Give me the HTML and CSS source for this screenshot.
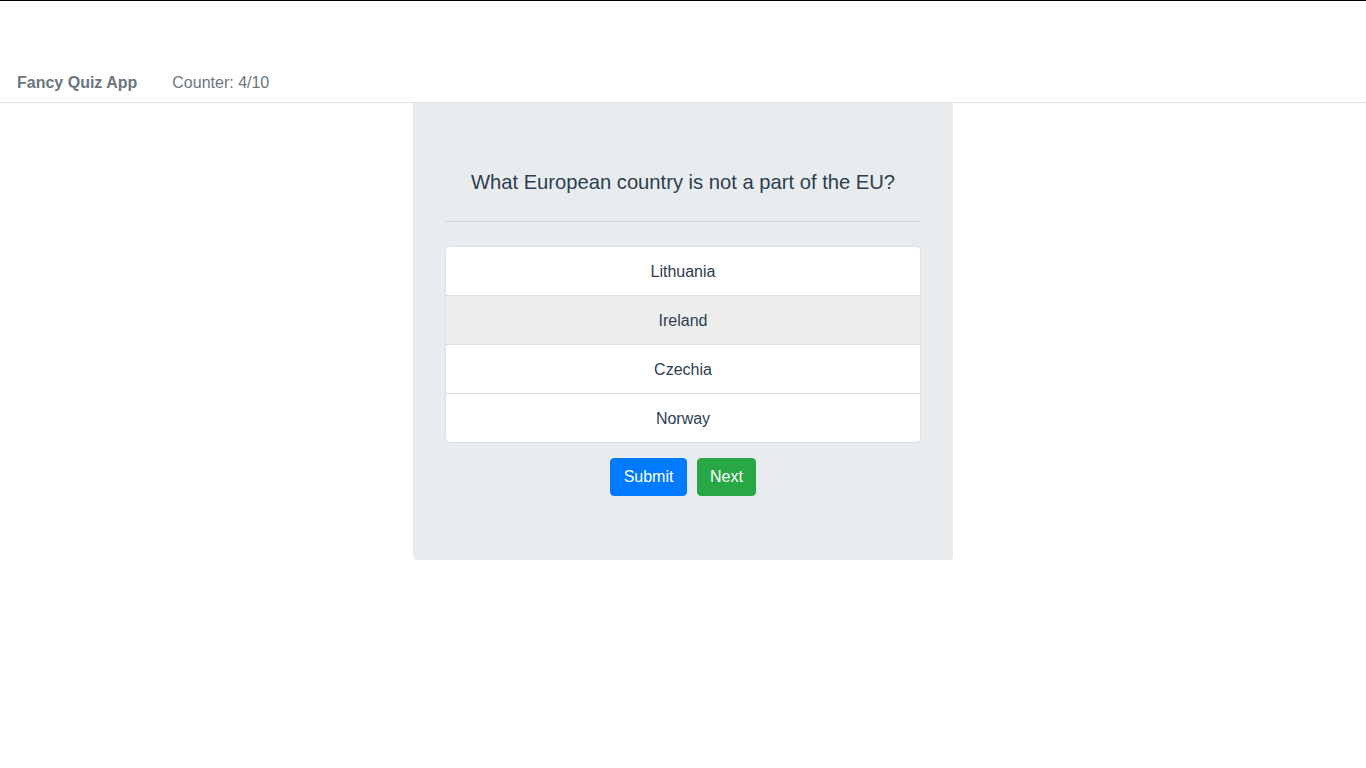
FILE: index.html
```html
<!DOCTYPE html>
<html lang="en">
<head>
<meta charset="utf-8">
<title>Fancy Quiz App</title>
<link rel="stylesheet" href="styles.css">
</head>
<body>
<div class="topline"></div>
<nav class="navbar">
  <span class="brand">Fancy Quiz App</span>
  <span class="counter">Counter: 4/10</span>
</nav>
<main class="container">
  <section class="jumbotron">
    <p class="question">What European country is not a part of the EU?</p>
    <hr class="divider">
    <ul class="answers">
      <li class="answer">Lithuania</li>
      <li class="answer selected">Ireland</li>
      <li class="answer">Czechia</li>
      <li class="answer">Norway</li>
    </ul>
    <div class="actions">
      <button class="btn btn-primary">Submit</button>
      <button class="btn btn-success">Next</button>
    </div>
  </section>
</main>
</body>
</html>
```
FILE: styles.css
```css
* { box-sizing: border-box; }
html, body {
  margin: 0;
  padding: 0;
  background: #fff;
  font-family: "Liberation Sans", Arial, sans-serif;
  font-size: 16px;
  line-height: 1.5;
  color: #2c3e50;
}
.topline {
  height: 1px;
  background: #000;
}
.navbar {
  display: flex;
  align-items: flex-end;
  height: 102px;
  padding: 0 17px 7px;
  border-bottom: 1px solid #dee2e6;
}
.brand {
  font-weight: bold;
  color: #6c757d;
  margin-right: 35px;
}
.counter {
  color: #6c757d;
}
.container {
  display: flex;
  justify-content: center;
}
.jumbotron {
  width: 540px;
  background: #e9ecef;
  border-radius: 0 0 4px 4px;
  padding: 64px 32px 64px;
}
.question {
  margin: 0;
  font-size: 20.2px;
  line-height: 30px;
  text-align: center;
  color: #2c3e50;
}
.divider {
  margin: 24px 0;
  border: 0;
  border-top: 1px solid #d3d6d9;
}
.answers {
  list-style: none;
  margin: 0;
  padding: 0;
  background: #fff;
  border: 1px solid #dfdfdf;
  border-radius: 4px;
  overflow: hidden;
}
.answer {
  padding: 13px 20px 11px;
  height: 49px;
  text-align: center;
  border-top: 1px solid #dfdfdf;
  color: #2c3e50;
}
.answer:first-child {
  border-top: 0;
  height: 48px;
}
.answer.selected {
  background: #ededed;
}
.actions {
  display: flex;
  justify-content: center;
  gap: 10px;
  margin-top: 15px;
}
.btn {
  font-family: inherit;
  font-size: 16px;
  line-height: 24px;
  padding: 6px 12px;
  border: 1px solid transparent;
  border-radius: 4px;
  color: #fff;
}
.btn-primary { background: #007bff; border-color: #007bff; padding: 6px 12.5px; }
.btn-success { background: #28a745; border-color: #28a745; }
```
